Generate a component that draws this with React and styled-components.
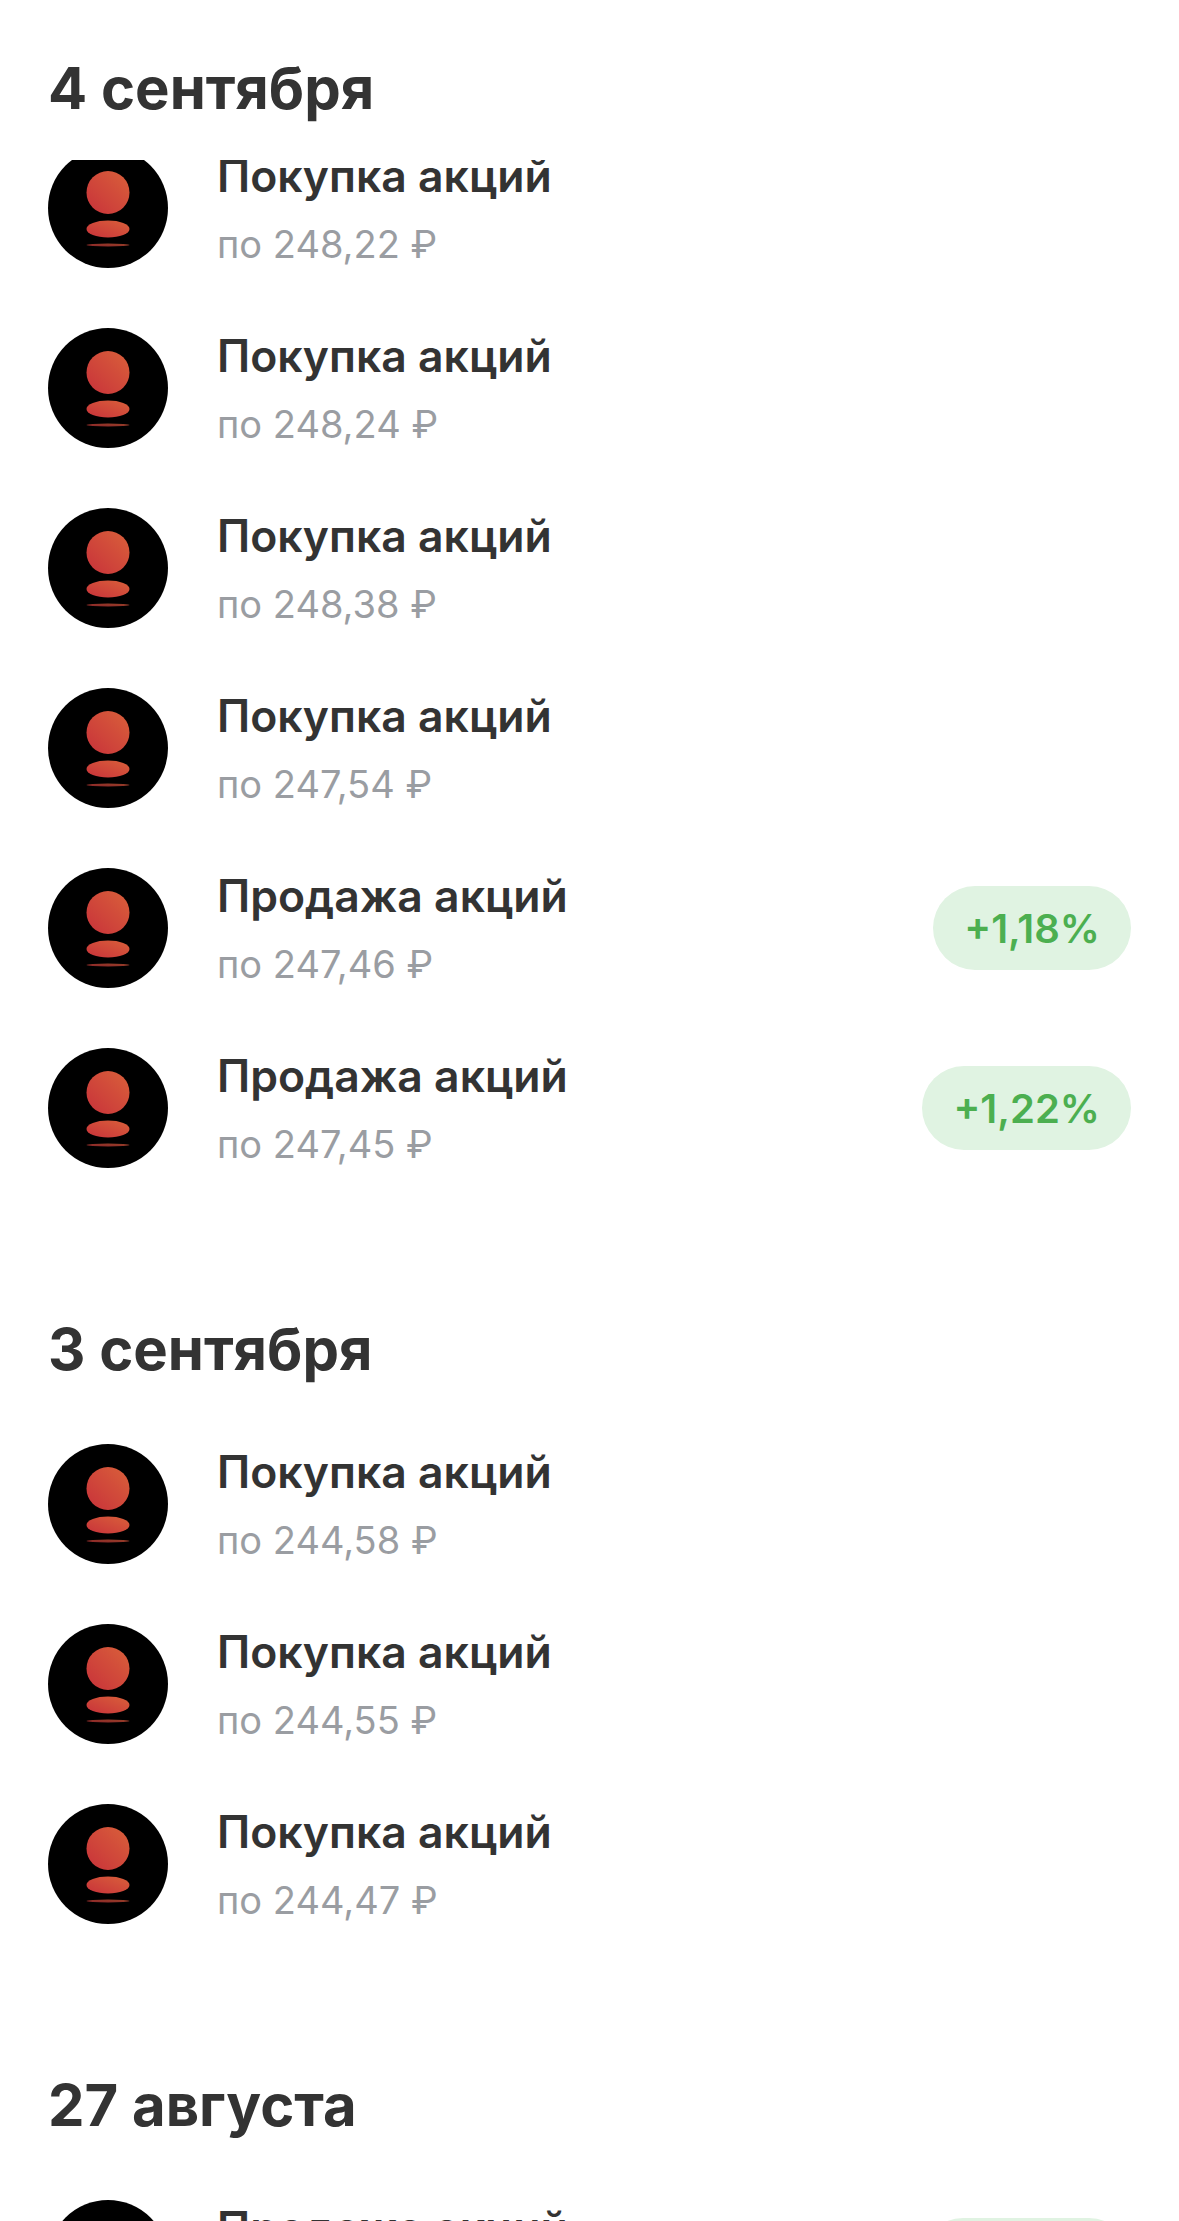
import React from 'react';
import styled, { createGlobalStyle } from 'styled-components';

const GlobalStyle = createGlobalStyle`
    html, body {
        margin: 0;
        padding: 0;
        background: #ffffff;
        overflow: hidden;
    }
`

const days = [
    {
        title: '4 сентября',
        offset: 42,
        items: [
            { name: 'Покупка акций', price: '248,22' },
            { name: 'Покупка акций', price: '248,24' },
            { name: 'Покупка акций', price: '248,38' },
            { name: 'Покупка акций', price: '247,54' },
            { name: 'Продажа акций', price: '247,46', profit: '+1,18%' },
            { name: 'Продажа акций', price: '247,45', profit: '+1,22%' },
        ],
    },
    {
        title: '3 сентября',
        items: [
            { name: 'Покупка акций', price: '244,58' },
            { name: 'Покупка акций', price: '244,55' },
            { name: 'Покупка акций', price: '244,47' },
        ],
    },
    {
        title: '27 августа',
        items: [
            { name: 'Продажа акций', price: '243,10', profit: '+1,20%' },
        ],
    },
];

const Logo = ({ id }) => (
    <LogoCircle viewBox="0 0 120 120">
        <defs>
            <linearGradient id={id} x1="0" y1="1" x2="1" y2="0">
                <stop offset="0" stopColor="#c8323a" />
                <stop offset="1" stopColor="#d9603a" />
            </linearGradient>
        </defs>
        <circle cx="60" cy="60" r="60" fill="#000" />
        <ellipse cx="60" cy="44.5" rx="21.5" ry="21.5" fill={`url(#${id})`} />
        <ellipse cx="60" cy="81" rx="21.5" ry="8.5" fill={`url(#${id})`} />
        <ellipse cx="60" cy="97" rx="21.5" ry="1.5" fill={`url(#${id})`} opacity="0.7" />
    </LogoCircle>
);

const App = () => {
    return (
        <>
            <GlobalStyle />
            <Page>
                {days.map((day, d) => (
                    <Day key={day.title}>
                        <DayTitle $clipped={!!day.offset}>{day.title}</DayTitle>
                        <List $clipped={!!day.offset}>
                            <Rows $offset={day.offset || 0}>
                                {day.items.map((item, i) => (
                                    <Row key={i}>
                                        <Logo id={`logo-${d}-${i}`} />
                                        <Info>
                                            <Name>{item.name}</Name>
                                            <Price>по {item.price} ₽</Price>
                                        </Info>
                                        {item.profit && <Profit>{item.profit}</Profit>}
                                    </Row>
                                ))}
                            </Rows>
                        </List>
                    </Day>
                ))}
            </Page>
        </>
    )
}

export default App;


const Page = styled.div`
    width: 1179px;
    height: 2221px;
    overflow: hidden;
    box-sizing: border-box;
    padding: 58px 48px 0 48px;
    background: #ffffff;
    font-family: Inter, "Noto Sans", sans-serif;
`

const Day = styled.section`
    margin-bottom: 121px;
`

const DayTitle = styled.h2`
    margin: 0 0 ${props => props.$clipped ? '42px' : '35px'};
    height: 60px;
    line-height: 60px;
    font-size: 58px;
    font-weight: 700;
    color: #333333;
`

const List = styled.div`
    overflow: ${props => props.$clipped ? 'hidden' : 'visible'};
`

const Rows = styled.div`
    margin-top: ${props => -props.$offset}px;
`

const Row = styled.div`
    display: flex;
    align-items: center;
    height: 180px;
`

const LogoCircle = styled.svg`
    width: 120px;
    height: 120px;
    flex-shrink: 0;
`

const Info = styled.div`
    display: flex;
    flex-direction: column;
    gap: 21px;
    padding-top: 3px;
    margin-left: 49px;
    flex: 1;
`

const Name = styled.div`
    font-size: 44.5px;
    line-height: 48px;
    font-weight: 600;
    color: #333333;
`

const Price = styled.div`
    font-size: 38px;
    line-height: 46px;
    font-weight: 400;
    color: #9a9da2;
`

const Profit = styled.div`
    display: flex;
    align-items: center;
    height: 84px;
    padding: 0 31px;
    border-radius: 42px;
    background: #e0f3e2;
    color: #4caf50;
    font-size: 40px;
    font-weight: 600;
`
